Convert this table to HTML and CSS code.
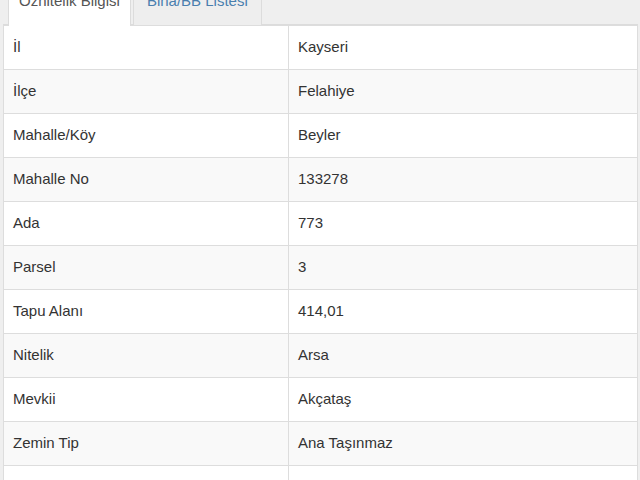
FILE: index.html
```html
<!DOCTYPE html>
<html lang="tr">
<head>
<meta charset="utf-8">
<title>Öznitelik Bilgisi</title>
<link rel="stylesheet" href="styles.css">
</head>
<body>
<div class="page">
  <ul class="tabs">
    <li class="tab active">Öznitelik Bilgisi</li>
    <li class="tab">Bina/BB Listesi</li>
  </ul>
  <table class="info">
    <tbody>
      <tr><td>İl</td><td>Kayseri</td></tr>
      <tr><td>İlçe</td><td>Felahiye</td></tr>
      <tr><td>Mahalle/Köy</td><td>Beyler</td></tr>
      <tr><td>Mahalle No</td><td>133278</td></tr>
      <tr><td>Ada</td><td>773</td></tr>
      <tr><td>Parsel</td><td>3</td></tr>
      <tr><td>Tapu Alanı</td><td>414,01</td></tr>
      <tr><td>Nitelik</td><td>Arsa</td></tr>
      <tr><td>Mevkii</td><td>Akçataş</td></tr>
      <tr><td>Zemin Tip</td><td>Ana Taşınmaz</td></tr>
      <tr class="faint"><td>Pafta</td><td>K35-C-01-B-2</td></tr>
    </tbody>
  </table>
</div>
</body>
</html>
```

FILE: styles.css
```css
html, body {
  margin: 0;
  padding: 0;
  background: #efefef;
}
body {
  font-family: "Liberation Sans", Arial, sans-serif;
  font-size: 15px;
  color: #333;
  overflow: hidden;
  height: 480px;
}
.page {
  padding: 0 2px 0 3px;
}
.tabs {
  list-style: none;
  margin: -20px 0 0 0;
  padding: 0 0 0 5px;
  display: flex;
  border-bottom: 1px solid #dcdcdc;
  height: 44px;
}
.tab {
  padding: 10px 13px 0 13px;
  line-height: 20px;
  height: 34px;
  color: #4a7fae;
  border: 1px solid #dcdcdc;
  border-bottom: none;
  background: #eeeeee;
  margin-right: 2px;
  margin-bottom: -1px;
}
.tab.active {
  padding: 10px 10px 0 10px;
  background: #fff;
  color: #555;
  height: 35px;
  border-color: #dcdcdc;
}
.info {
  width: 100%;
  border-collapse: collapse;
  background: #fff;
  border: 1px solid #dddddd;
  table-layout: fixed;
}
.info td {
  border: 1px solid #dddddd;
  padding: 11px 9px 12px 9px;
  line-height: 20px;
  vertical-align: middle;
}
.info td:first-child {
  width: 266px;
}
.info tr:nth-child(even) td {
  background: #f9f9f9;
}
.info tr.faint td {
  color: #e6e6e6;
}
```
